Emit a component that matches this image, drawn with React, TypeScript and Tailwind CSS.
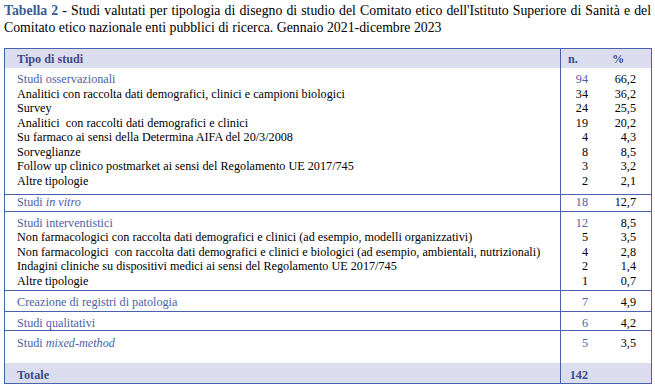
import React from 'react'

type Line = { label: React.ReactNode; n: string; pct: string; head?: boolean }
type Group = { lines: Line[]; pad: string }

const groups: Group[] = [
  {
    pad: 'pt-[4px] pb-[6px]',
    lines: [
      { label: 'Studi osservazionali', n: '94', pct: '66,2', head: true },
      { label: 'Analitici con raccolta dati demografici, clinici e campioni biologici', n: '34', pct: '36,2' },
      { label: 'Survey', n: '24', pct: '25,5' },
      { label: 'Analitici  con raccolti dati demografici e clinici', n: '19', pct: '20,2' },
      { label: 'Su farmaco ai sensi della Determina AIFA del 20/3/2008', n: '4', pct: '4,3' },
      { label: 'Sorveglianze', n: '8', pct: '8,5' },
      { label: 'Follow up clinico postmarket ai sensi del Regolamento UE 2017/745', n: '3', pct: '3,2' },
      { label: 'Altre tipologie', n: '2', pct: '2,1' },
    ],
  },
  {
    pad: 'pt-[0px] pb-[1px]',
    lines: [{ label: <>Studi <i>in vitro</i></>, n: '18', pct: '12,7', head: true }],
  },
  {
    pad: 'pt-[4px] pb-[2px]',
    lines: [
      { label: 'Studi interventistici', n: '12', pct: '8,5', head: true },
      { label: 'Non farmacologici con raccolta dati demografici e clinici (ad esempio, modelli organizzativi)', n: '5', pct: '3,5' },
      { label: 'Non farmacologici  con raccolta dati demografici e clinici e biologici (ad esempio, ambientali, nutrizionali)', n: '4', pct: '2,8' },
      { label: 'Indagini cliniche su dispositivi medici ai sensi del Regolamento UE 2017/745', n: '2', pct: '1,4' },
      { label: 'Altre tipologie', n: '1', pct: '0,7' },
    ],
  },
  {
    pad: 'pt-[3.5px] pb-[2px]',
    lines: [{ label: 'Creazione di registri di patologia', n: '7', pct: '4,9', head: true }],
  },
  {
    pad: 'pt-[3.5px] pb-[0px]',
    lines: [{ label: 'Studi qualitativi', n: '6', pct: '4,2', head: true }],
  },
  {
    pad: 'pt-[4.5px] pb-[13px]',
    lines: [{ label: <>Studi <i>mixed-method</i></>, n: '5', pct: '3,5', head: true }],
  },
]

export default function App() {
  return (
    <div className="w-[655px] h-[388px] bg-white font-[family-name:'Liberation_Serif',serif] text-black overflow-hidden">
      <div className="pl-[4px] pr-[4px] pt-[1.5px] text-[13.8px] leading-[17px]">
        <p className="text-justify [text-align-last:justify] whitespace-nowrap">
          <b className="text-[#3e5993]">Tabella 2</b> - Studi valutati per tipologia di disegno di studio del Comitato etico dell'Istituto Superiore di Sanità e del
        </p>
        <p>Comitato etico nazionale enti pubblici di ricerca. Gennaio 2021-dicembre 2023</p>
      </div>

      <div className="ml-[4px] mt-[12.5px] w-[648px] border border-[#4a62ad] text-[12.2px] leading-[14.5px]">
        <div className="flex h-[19px] bg-[#dcdef0] font-bold text-[#3d4b8a]">
          <div className="flex-1 pl-[12px] pt-[3px]">Tipo di studi</div>
          <div className="flex w-[91px] border-l border-[#4a62ad] pt-[3px]">
            <span className="w-[28px] pl-[7px]">n.</span>
            <span className="w-[48px] pl-[23px]">%</span>
          </div>
        </div>

        {groups.map((g, gi) => (
          <div key={gi} className={`flex ${gi > 0 ? 'border-t border-[#4a62ad]' : ''}`}>
            <div className={`flex-1 pl-[12px] whitespace-pre ${g.pad}`}>
              {g.lines.map((l, li) => (
                <div key={li} className={l.head ? 'text-[#4e5fa5]' : ''}>{l.label}</div>
              ))}
            </div>
            <div className={`w-[91px] border-l border-[#4a62ad] ${g.pad}`}>
              {g.lines.map((l, li) => (
                <div key={li} className="flex">
                  <span className={`w-[27px] text-right ${l.head ? 'text-[#4e5fa5]' : ''}`}>{l.n}</span>
                  <span className="w-[48px] text-right">{l.pct}</span>
                </div>
              ))}
            </div>
          </div>
        ))}

        <div className="flex h-[20px] bg-[#dcdef0] font-bold text-[#3d4b8a]">
          <div className="flex-1 pl-[12px] pt-[4.5px]">Totale</div>
          <div className="w-[91px] border-l border-[#4a62ad] pt-[4.5px]">
            <span className="inline-block w-[27px] text-right">142</span>
          </div>
        </div>
      </div>
    </div>
  )
}
